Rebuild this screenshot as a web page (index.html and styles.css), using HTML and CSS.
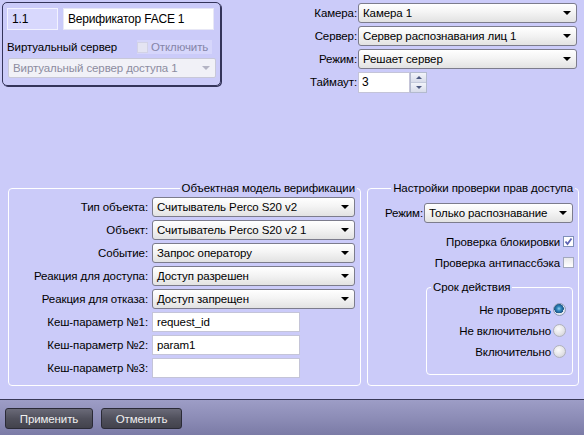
FILE: index.html
```html
<!DOCTYPE html>
<html lang="ru">
<head>
<meta charset="utf-8">
<title>Верификатор FACE</title>
<link rel="stylesheet" href="styles.css">
</head>
<body>
<div class="main">
  <div class="top">
    <div class="server-box">
      <div class="row-ids">
        <div class="field field-id">1.1</div>
        <div class="field field-name">Верификатор FACE 1</div>
      </div>
      <div class="row-virtual">
        <span class="virt-label">Виртуальный сервер</span>
        <span class="disabled-check"><span class="cb cb-disabled"></span><span class="dis-text">Отключить</span></span>
      </div>
      <div class="combo combo-disabled"><span>Виртуальный сервер доступа 1</span><i class="arrow arrow-gray"></i></div>
    </div>
    <div class="camera-form">
      <span class="lbl">Камера:</span>
      <div class="combo"><span>Камера 1</span><i class="arrow"></i></div>
      <span class="lbl">Сервер:</span>
      <div class="combo"><span>Сервер распознавания лиц 1</span><i class="arrow"></i></div>
      <span class="lbl">Режим:</span>
      <div class="combo"><span>Решает сервер</span><i class="arrow"></i></div>
      <span class="lbl">Таймаут:</span>
      <div class="spin-wrap">
        <div class="field field-timeout">3</div>
        <div class="spinner">
          <div class="spin-btn"><i class="tri-up"></i></div>
          <div class="spin-btn"><i class="tri-down"></i></div>
        </div>
      </div>
    </div>
  </div>

  <div class="groups">
    <div class="group group-left">
      <span class="group-title title-right">Объектная модель верификации</span>
      <div class="model-grid">
        <span class="lbl">Тип объекта:</span>
        <div class="combo"><span>Считыватель Perco S20 v2</span><i class="arrow"></i></div>
        <span class="lbl">Объект:</span>
        <div class="combo"><span>Считыватель Perco S20 v2 1</span><i class="arrow"></i></div>
        <span class="lbl">Событие:</span>
        <div class="combo"><span>Запрос оператору</span><i class="arrow"></i></div>
        <span class="lbl">Реакция для доступа:</span>
        <div class="combo"><span>Доступ разрешен</span><i class="arrow"></i></div>
        <span class="lbl">Реакция для отказа:</span>
        <div class="combo"><span>Доступ запрещен</span><i class="arrow"></i></div>
        <span class="lbl">Кеш-параметр №1:</span>
        <div class="field field-cache">request_id</div>
        <span class="lbl">Кеш-параметр №2:</span>
        <div class="field field-cache">param1</div>
        <span class="lbl">Кеш-параметр №3:</span>
        <div class="field field-cache"></div>
      </div>
    </div>

    <div class="group group-right">
      <span class="group-title title-right">Настройки проверки прав доступа</span>
      <div class="mode-row">
        <span class="lbl">Режим:</span>
        <div class="combo combo-mode"><span>Только распознавание</span><i class="arrow"></i></div>
      </div>
      <div class="check-row check-first">
        <span>Проверка блокировки</span>
        <span class="cb cb-on">
          <svg width="9" height="9" viewBox="0 0 9 9"><polyline points="1.5,4.5 3.5,7 7.5,1.5" fill="none" stroke="#5d64b4" stroke-width="1.8"/></svg>
        </span>
      </div>
      <div class="check-row">
        <span>Проверка антипассбэка</span>
        <span class="cb"></span>
      </div>
      <div class="group group-inner">
        <span class="group-title title-left">Срок действия</span>
        <div class="radio-row"><span>Не проверять</span><span class="radio radio-on"></span></div>
        <div class="radio-row"><span>Не включительно</span><span class="radio"></span></div>
        <div class="radio-row"><span>Включительно</span><span class="radio"></span></div>
      </div>
    </div>
  </div>
</div>
<div class="bottom-bar">
  <button class="btn btn-apply">Применить</button>
  <button class="btn btn-cancel">Отменить</button>
</div>
</body>
</html>
```

FILE: styles.css
```css
* { box-sizing: border-box; }

html, body {
  margin: 0;
  padding: 0;
}

body {
  width: 584px;
  height: 435px;
  overflow: hidden;
  background: #cbcbf9;
  font-family: "Liberation Sans", Arial, sans-serif;
  font-size: 11.5px;
  letter-spacing: -0.1px;
  color: #000;
}

.main {
  height: 399px;
}

.top {
  display: flex;
  justify-content: space-between;
  align-items: flex-start;
  height: 188px;
  padding: 2px 7px 0 2px;
}

/* top-left box */
.server-box {
  width: 219px;
  height: 84px;
  border: 1px solid #34345a;
  border-radius: 5px;
  box-shadow: 1px 1px 0 #34345a;
  padding: 5px 0 0 4px;
}

.row-ids {
  display: flex;
  gap: 5px;
}

.field {
  height: 20px;
  background: #fff;
  border: 1px solid #c4c4d8;
  padding: 0 4px;
  line-height: 18px;
  white-space: nowrap;
}

.field-id {
  width: 51px;
  height: 22px;
  line-height: 20px;
  font-size: 12px;
  background: #d8d8fd;
  border-color: #f2f2ff;
}

.field-name {
  width: 151px;
  height: 22px;
  line-height: 20px;
  font-size: 12px;
  letter-spacing: -0.2px;
  border-color: #e8e8f6;
}

.row-virtual {
  display: flex;
  align-items: center;
  height: 14px;
  margin-top: 10px;
}

.virt-label {
  width: 130px;
}

.disabled-check {
  display: flex;
  align-items: center;
  gap: 3px;
  background: #d6d6fb;
  height: 14px;
  padding-right: 4px;
}

.dis-text {
  color: #8585a8;
}

.cb {
  width: 11px;
  height: 11px;
  background: linear-gradient(#e9e9ec, #ffffff);
  border: 1px solid #a2a8bd;
  display: flex;
  align-items: center;
  justify-content: center;
}

.cb-disabled {
  background: #e4e4f2;
  border-color: #d2d2e6;
}

.cb-on {
  background: #fff;
  border-color: #7f8fb8;
}

/* combos */
.combo {
  height: 20px;
  display: flex;
  align-items: center;
  justify-content: space-between;
  padding: 0 5px 0 4px;
  border: 1px solid #7c7c8c;
  border-radius: 3px;
  background: linear-gradient(#ffffff 0%, #f4f4f4 45%, #e2e2e2 100%);
  white-space: nowrap;
}

.combo-disabled {
  width: 208px;
  margin-top: 4px;
  margin-left: 1px;
  color: #8c8ca0;
  border-color: #c8c8d8;
  border-radius: 2px;
  background: #f1f1f7;
}

.arrow {
  width: 0;
  height: 0;
  border-left: 4px solid transparent;
  border-right: 4px solid transparent;
  border-top: 4px solid #000;
}

.arrow-gray {
  border-top-color: #b4b4c4;
}

/* camera form */
.camera-form {
  display: grid;
  grid-template-columns: auto 219px;
  grid-auto-rows: 20px;
  column-gap: 1px;
  row-gap: 3px;
  margin-top: 1px;
}

.lbl {
  text-align: right;
  align-self: center;
  white-space: nowrap;
}

.spin-wrap {
  display: flex;
  height: 21px;
}

.field-timeout {
  width: 52px;
  height: 21px;
  line-height: 19px;
  padding-left: 3px;
  font-size: 12px;
}

.spinner {
  width: 17px;
  height: 21px;
  display: flex;
  flex-direction: column;
  border: 1px solid #b3bace;
  background: #fff;
}

.spin-btn {
  flex: 1;
  display: flex;
  align-items: center;
  justify-content: center;
  background: linear-gradient(#f2f4fa, #d8dcea);
  border-bottom: 1px solid #c4cadb;
}

.spin-btn:last-child {
  border-bottom: 0;
}

.tri-up, .tri-down {
  width: 0;
  height: 0;
  border-left: 3px solid transparent;
  border-right: 3px solid transparent;
}

.tri-up { border-bottom: 3px solid #4d5a80; }
.tri-down { border-top: 3px solid #4d5a80; }

/* groups */
.groups {
  display: flex;
  gap: 6px;
  padding-left: 8px;
}

.group {
  position: relative;
  border: 1px solid #fff;
  border-radius: 4px;
}

.group-title {
  position: absolute;
  top: -8px;
  background: #cbcbf9;
  padding: 0 2px;
  line-height: 14px;
  white-space: nowrap;
}

.title-right { right: 3px; }
.title-left { left: 4px; }

.group-left {
  width: 353px;
  height: 198px;
  padding-top: 8px;
}

.model-grid {
  display: grid;
  grid-template-columns: 139px 203px;
  grid-auto-rows: 20px;
  column-gap: 4px;
  row-gap: 3px;
}

.field-cache {
  width: 148px;
  height: 20px;
}

.group-right {
  width: 212px;
  height: 198px;
  padding-top: 14px;
}

.mode-row {
  display: flex;
  justify-content: flex-end;
  align-items: center;
  gap: 1px;
  padding-right: 5px;
}

.combo-mode {
  width: 149px;
}

.check-row {
  display: flex;
  justify-content: flex-end;
  align-items: center;
  gap: 3px;
  height: 11px;
  margin-top: 10px;
  padding-right: 4px;
}

.check-first {
  margin-top: 13px;
}

.group-inner {
  margin: 19px 5px 0 58px;
  height: 88px;
  padding: 15px 6px 0 0;
  display: flex;
  flex-direction: column;
  gap: 8px;
}

.radio-row {
  display: flex;
  justify-content: flex-end;
  align-items: center;
  gap: 2px;
  height: 13px;
}

.radio {
  width: 13px;
  height: 13px;
  border-radius: 50%;
  border: 1px solid #b0b2ba;
  background: radial-gradient(circle at 40% 35%, #fcfcfc 0%, #e4e4e8 55%, #c8c8cf 100%);
}

.radio-on {
  border-color: #8d9ab4;
  background:
    radial-gradient(circle at 45% 42%, #8fd0f0 0%, #2f86bd 25%, #1d5686 52%, transparent 56%),
    radial-gradient(circle, #f4f6fa 0%, #d6dbe6 100%);
}

/* bottom bar */
.bottom-bar {
  height: 36px;
  border-top: 1px solid #383858;
  background: linear-gradient(#9d9dc6 0%, #8d8db7 50%, #7b7ba6 100%);
  display: flex;
  align-items: flex-start;
  gap: 8px;
  padding: 8px 0 0 5px;
}

.btn {
  height: 21px;
  border: 1px solid #2a2a36;
  border-radius: 3px;
  background: linear-gradient(#6a6a78 0%, #50505c 50%, #42424c 100%);
  color: #f0f0f0;
  font-family: "Liberation Sans", Arial, sans-serif;
  font-size: 11.5px;
  letter-spacing: -0.1px;
  padding: 0;
}

.btn-apply { width: 88px; }
.btn-cancel { width: 81px; }
```
